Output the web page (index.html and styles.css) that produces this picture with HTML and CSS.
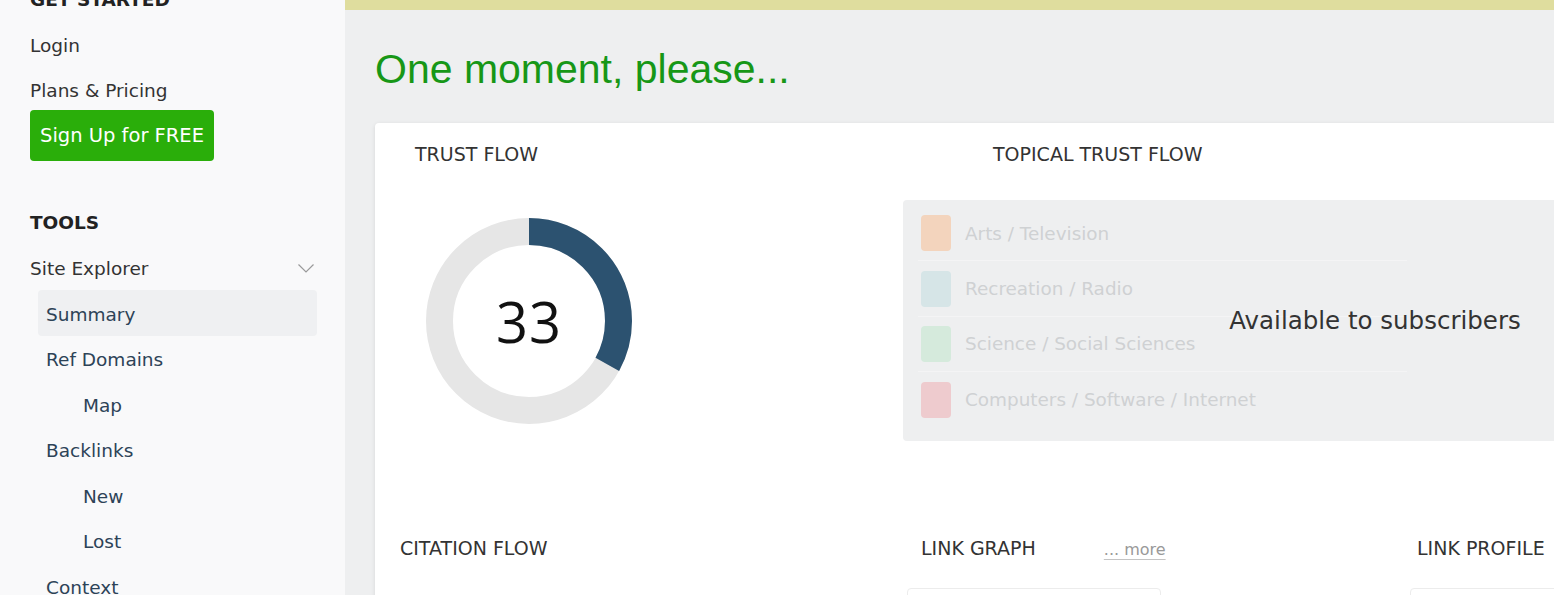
FILE: index.html
```html
<!DOCTYPE html>
<html lang="en">
<head>
    <meta charset="UTF-8">
    <meta name="viewport" content="width=device-width, initial-scale=1.0">
    <title>Site Explorer - Summary</title>
    <link rel="stylesheet" href="styles.css">
</head>
<body>
    <aside class="sidebar">
        <h3 class="side-heading side-heading-first">GET STARTED</h3>
        <a class="side-link" href="#">Login</a>
        <a class="side-link" href="#">Plans &amp; Pricing</a>
        <a class="btn-signup" href="#">Sign Up for FREE</a>

        <h3 class="side-heading">TOOLS</h3>
        <div class="side-link side-toggle">
            <span>Site Explorer</span>
            <svg width="16" height="9" viewBox="0 0 16 9">
                <path d="M0.5 0.5 L8 8 L15.5 0.5" fill="none" stroke="#9a9a9a" stroke-width="1.2"/>
            </svg>
        </div>
        <ul class="side-sub">
            <li class="active"><a href="#">Summary</a></li>
            <li><a href="#">Ref Domains</a></li>
            <li class="deep"><a href="#">Map</a></li>
            <li><a href="#">Backlinks</a></li>
            <li class="deep"><a href="#">New</a></li>
            <li class="deep"><a href="#">Lost</a></li>
            <li><a href="#">Context</a></li>
        </ul>
    </aside>

    <main class="main">
        <div class="notice-bar"></div>
        <h1 class="title">One moment, please...</h1>

        <section class="card">
            <div class="card-top">
                <div class="trust">
                    <h2 class="card-heading">TRUST FLOW</h2>
                    <div class="donut">
                        <svg width="206" height="206" viewBox="0 0 206 206">
                            <circle cx="103" cy="103" r="89.5" fill="none" stroke="#e6e6e6" stroke-width="27"/>
                            <circle cx="103" cy="103" r="89.5" fill="none" stroke="#2c5270" stroke-width="27"
                                    stroke-dasharray="185.6 600" transform="rotate(-90 103 103)"/>
                        </svg>
                        <span class="donut-value">33</span>
                    </div>
                </div>

                <div class="topical">
                    <h2 class="card-heading topical-heading">TOPICAL TRUST FLOW</h2>
                    <div class="topical-panel">
                        <ul class="topic-list">
                            <li><span class="swatch swatch-orange"></span>Arts / Television</li>
                            <li><span class="swatch swatch-teal"></span>Recreation / Radio</li>
                            <li><span class="swatch swatch-green"></span>Science / Social Sciences</li>
                            <li><span class="swatch swatch-red"></span>Computers / Software / Internet</li>
                        </ul>
                        <p class="locked">Available to subscribers</p>
                    </div>
                </div>
            </div>

            <div class="card-bottom">
                <div class="col col-citation">
                    <h2 class="card-heading">CITATION FLOW</h2>
                </div>
                <div class="col col-graph">
                    <div class="col-head">
                        <h2 class="card-heading">LINK GRAPH</h2>
                        <a class="more" href="#">... more</a>
                    </div>
                    <div class="mini-box"></div>
                </div>
                <div class="col col-profile">
                    <h2 class="card-heading">LINK PROFILE</h2>
                    <div class="mini-box"></div>
                </div>
            </div>
        </section>
    </main>
</body>
</html>
```

FILE: styles.css
```css
body {
    margin: 0;
    padding: 0;
    display: flex;
    height: 595px;
    overflow: hidden;
    font-family: 'DejaVu Sans', sans-serif;
    background-color: #eeeff0;
    color: #333;
}

a {
    text-decoration: none;
    color: inherit;
}

/* sidebar */
.sidebar {
    width: 345px;
    flex-shrink: 0;
    box-sizing: border-box;
    padding: 0 28px 0 30px;
    background-color: #f9f9fa;
    font-size: 18.5px;
}

.side-heading {
    margin: 48px 0 9px;
    font-size: 18.5px;
    line-height: 27px;
    font-weight: bold;
    color: #222;
}

.side-heading-first {
    margin: -14px 0 9px;
}

.side-link {
    display: block;
    padding: 10px 0 8px;
    line-height: 27px;
    color: #333;
}

.side-toggle {
    display: flex;
    justify-content: space-between;
    align-items: center;
    padding-right: 3px;
}

.btn-signup {
    display: inline-block;
    margin-top: -2px;
    padding: 0 10px;
    line-height: 51px;
    font-size: 19.5px;
    color: #fff;
    background-color: #2aae0a;
    border-radius: 4px;
}

.side-sub {
    list-style: none;
    margin: 0 0 0 8px;
    padding: 0;
}

.side-sub li a {
    display: block;
    padding: 10.5px 8px 8.1px;
    line-height: 27px;
    color: #2d4357;
    border-radius: 4px;
}

.side-sub li.active a {
    background-color: #eff0f2;
}

.side-sub li.deep a {
    padding-left: 45px;
}

/* main */
.main {
    flex: 1;
    min-width: 0;
    overflow: hidden;
    padding-left: 30px;
}

.notice-bar {
    height: 10px;
    margin-left: -30px;
    background-color: #dfdd9e;
}

.title {
    margin: 36px 0 31px;
    font-family: 'Liberation Sans', Arial, sans-serif;
    font-size: 41px;
    font-weight: normal;
    line-height: 46px;
    color: #179717;
}

.card {
    width: 1500px;
    height: 600px;
    padding-top: 18px;
    background-color: #fff;
    border-radius: 4px;
    box-shadow: 0 1px 4px rgba(0,0,0,0.1);
}

.card-heading {
    margin: 0;
    font-size: 19px;
    font-weight: normal;
    line-height: 27px;
    color: #333;
}

.card-top {
    display: grid;
    grid-template-columns: 528px 1fr;
}

.trust {
    padding-left: 40px;
}

.donut {
    position: relative;
    width: 206px;
    height: 206px;
    margin: 50px 0 0 11px;
}

.donut svg {
    display: block;
}

.donut-value {
    position: absolute;
    inset: 0;
    display: flex;
    align-items: center;
    justify-content: center;
    font-family: 'Open Sans', sans-serif;
    font-size: 56px;
    color: #111;
    letter-spacing: 1px;
}

.topical-heading {
    padding-left: 90px;
}

.topical-panel {
    position: relative;
    width: 929px;
    margin-top: 31.5px;
    padding: 6.7px 0 13.5px 15px;
    background-color: #eeeff0;
    border-radius: 4px;
}

.topic-list {
    list-style: none;
    margin: 0;
    padding: 0;
    width: 489px;
}

.topic-list li {
    display: flex;
    align-items: center;
    gap: 14px;
    height: 55.3px;
    box-sizing: border-box;
    padding-left: 3px;
    font-size: 18.4px;
    color: #cfd1d3;
    border-bottom: 1px solid #f4f4f5;
}

.topic-list li:last-child {
    border-bottom: none;
}

.swatch {
    width: 30px;
    height: 36px;
    border-radius: 4px;
}

.swatch-orange { background-color: #f3d4bd; }
.swatch-teal { background-color: #d6e5e7; }
.swatch-green { background-color: #d5eadc; }
.swatch-red { background-color: #eecbce; }

.locked {
    position: absolute;
    inset: 0;
    margin: 0;
    display: flex;
    align-items: center;
    justify-content: center;
    font-size: 24.5px;
    color: #333;
}

.card-bottom {
    display: grid;
    grid-template-columns: 532px 503px 1fr;
    margin-top: 94px;
}

.col-citation {
    padding-left: 25px;
}

.col-graph .col-head {
    display: flex;
    align-items: baseline;
    gap: 68px;
    padding-left: 14px;
}

.col-profile .card-heading {
    padding-left: 7px;
}

.more {
    font-size: 16px;
    color: #999;
    text-decoration: underline;
    text-decoration-color: #c4c4c4;
    text-underline-offset: 4px;
}

.mini-box {
    width: 252px;
    height: 100px;
    margin-top: 26px;
    border: 1px solid #ececec;
    border-radius: 4px;
}
```
